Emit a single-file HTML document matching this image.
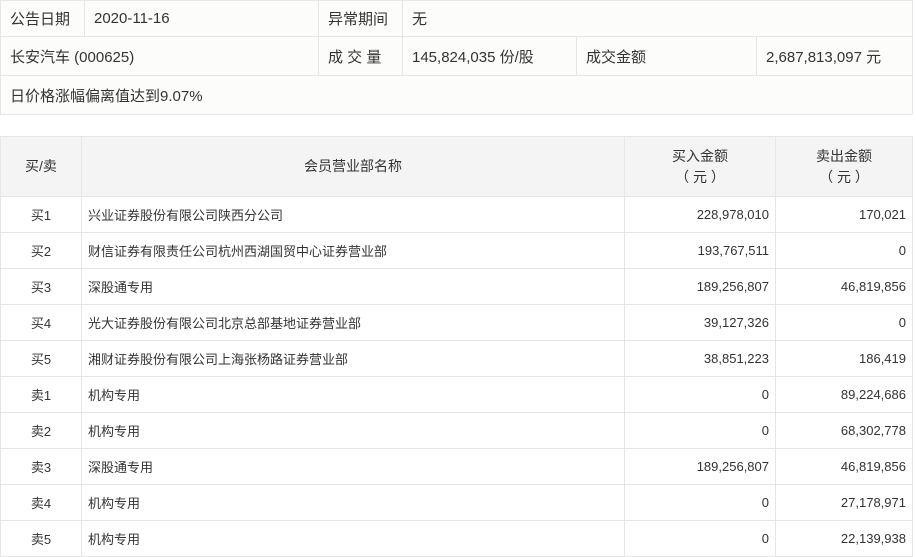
<!DOCTYPE html>
<html><head><meta charset="utf-8"><style>
body{margin:0;background:#fff;font-family:"Liberation Sans","Noto Sans CJK SC",sans-serif;color:#333;width:916px;height:557px;overflow:hidden}
table{border-collapse:collapse;position:absolute;left:0;table-layout:fixed}
td,th{border:1px solid #e6e6e6;padding:0;font-weight:normal}
#t1{top:0;width:912px;background:#fcfcfa;font-size:15px}
#t1 td{padding-left:9px;height:38px}
#t1 tr:first-child td{height:35px}
#t2{top:136px;width:912px;font-size:13px}
#t2 th{background:#f4f4f4;height:59px;line-height:21px;font-size:14px}
#t2 td{height:35px}
.c{text-align:center}.r{text-align:right;padding-right:6px!important}
.l{padding-left:6px}
</style></head><body>
<table id="t1">
<colgroup><col style="width:84px"><col style="width:234px"><col style="width:84px"><col style="width:174px"><col style="width:180px"><col style="width:156px"></colgroup>
<tr><td>公告日期</td><td>2020-11-16</td><td>异常期间</td><td colspan="3">无</td></tr>
<tr><td colspan="2">长安汽车 (000625)</td><td>成 交 量</td><td>145,824,035 份/股</td><td>成交金额</td><td>2,687,813,097 元</td></tr>
<tr><td colspan="6">日价格涨幅偏离值达到9.07%</td></tr>
</table>
<table id="t2">
<colgroup><col style="width:81px"><col style="width:543px"><col style="width:151px"><col style="width:137px"></colgroup>
<tr><th>买/卖</th><th>会员营业部名称</th><th>买入金额<br>（ 元 ）</th><th>卖出金额<br>（ 元 ）</th></tr>
<tr><td class="c">买1</td><td class="l">兴业证券股份有限公司陕西分公司</td><td class="r">228,978,010</td><td class="r">170,021</td></tr>
<tr><td class="c">买2</td><td class="l">财信证券有限责任公司杭州西湖国贸中心证券营业部</td><td class="r">193,767,511</td><td class="r">0</td></tr>
<tr><td class="c">买3</td><td class="l">深股通专用</td><td class="r">189,256,807</td><td class="r">46,819,856</td></tr>
<tr><td class="c">买4</td><td class="l">光大证券股份有限公司北京总部基地证券营业部</td><td class="r">39,127,326</td><td class="r">0</td></tr>
<tr><td class="c">买5</td><td class="l">湘财证券股份有限公司上海张杨路证券营业部</td><td class="r">38,851,223</td><td class="r">186,419</td></tr>
<tr><td class="c">卖1</td><td class="l">机构专用</td><td class="r">0</td><td class="r">89,224,686</td></tr>
<tr><td class="c">卖2</td><td class="l">机构专用</td><td class="r">0</td><td class="r">68,302,778</td></tr>
<tr><td class="c">卖3</td><td class="l">深股通专用</td><td class="r">189,256,807</td><td class="r">46,819,856</td></tr>
<tr><td class="c">卖4</td><td class="l">机构专用</td><td class="r">0</td><td class="r">27,178,971</td></tr>
<tr><td class="c">卖5</td><td class="l">机构专用</td><td class="r">0</td><td class="r">22,139,938</td></tr>
</table>
</body></html>
